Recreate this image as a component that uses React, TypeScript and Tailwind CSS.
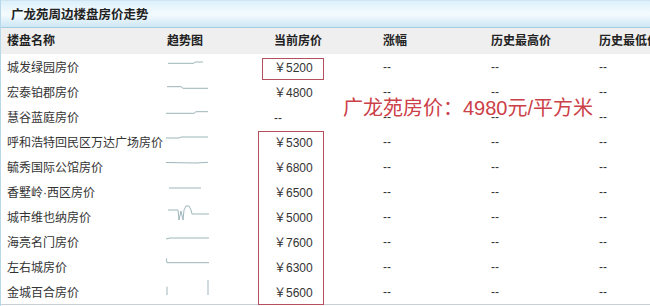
type Row = {
  name: string;
  price?: string;
  spark: string[];
};

const rows: Row[] = [
  { name: "城发绿园房价", price: "5200", spark: ["2,9.3 28,9.3 29,8 37,8"] },
  { name: "宏泰铂郡房价", price: "4800", spark: ["1,7.7 15,7.7 17,9.3 42,9.3"] },
  { name: "慧谷蓝庭房价", spark: ["0,9.3 28,9.3 30,7.7 42,7.7"] },
  { name: "呼和浩特回民区万达广场房价", price: "5300", spark: ["0,9 13,9 15,8 42,8"] },
  { name: "毓秀国际公馆房价", price: "6800", spark: ["0,8.5 30,9 42,8.3"] },
  { name: "香墅岭·西区房价", price: "6500", spark: ["3,9 35,9"] },
  {
    name: "城市维也纳房价",
    price: "5000",
    spark: ["2,6 12,6 13,16 15,7 17,16 18,6 20,2 23,2 25,6 26,10 43,10"],
  },
  { name: "海亮名门房价", price: "7600", spark: ["0,10 4,9 43,9"] },
  { name: "左右城房价", price: "6300", spark: ["0,4 1,8.7 43,8.7"] },
  { name: "金城百合房价", price: "5600", spark: ["1,7.7 1,16", "42,1 42,16"] },
];

const cols = "grid grid-cols-[160px_107px_109px_108px_108px_108px]";

function Sparkline({ lines }: { lines: string[] }) {
  return (
    <svg width="45" height="25" viewBox="0 0 45 25" className="ml-[5px]">
      {lines.map((pts, i) => (
        <polyline key={i} points={pts} fill="none" stroke="#9db6ba" strokeWidth="1" />
      ))}
    </svg>
  );
}

export default function App() {
  return (
    <div
      className="relative w-[650px] h-[306px] overflow-hidden bg-white text-[12px] text-[#333] border-l border-[#b7d8e8]"
      style={{ fontFamily: '"Liberation Sans", "Noto Sans CJK SC", sans-serif' }}
    >
      <div className="h-[28px] border-t border-[#cfe6f2] border-b border-b-[#a6cde1] bg-linear-to-b from-[#dcf0fa] via-[#f5fbfe] to-[#cde7f5] flex items-center pl-[10px] pt-[2px]">
        <span className="font-bold text-[12.5px] text-[#222]">广龙苑周边楼盘房价走势</span>
      </div>

      <div className={`${cols} w-[700px] h-[26px] items-center bg-[#efefef] font-bold text-[#222]`}>
        <div className="pl-[6px]">楼盘名称</div>
        <div className="pl-[6px]">趋势图</div>
        <div className="pl-[6px]">当前房价</div>
        <div className="pl-[6px]">涨幅</div>
        <div className="pl-[6px]">历史最高价</div>
        <div className="pl-[6px]">历史最低价</div>
      </div>

      <div className="w-[700px] border-b border-[#c9d1d8]">
        {rows.map((r) => (
          <div key={r.name} className={`${cols} h-[25px] items-center`}>
            <div className="pl-[6px] whitespace-nowrap pt-[2px]">{r.name}</div>
            <div className="h-[25px]">
              <Sparkline lines={r.spark} />
            </div>
            <div className="pl-[6px] pt-[2px]">{r.price ? `￥${r.price}` : "--"}</div>
            <div className="pl-[6px]">--</div>
            <div className="pl-[6px]">--</div>
            <div className="pl-[6px]">--</div>
          </div>
        ))}
      </div>

      {/* highlight marks over the price column */}
      <div className="absolute left-[261px] top-[58px] w-[62px] h-[22px] border-[1.5px] border-[#b4505e]" />
      <div className="absolute left-[257px] top-[131px] w-[66px] h-[174px] border-[1.5px] border-[#b4505e]" />

      <div className="absolute left-[342px] top-[96px] text-[20px] leading-[24px] text-[#cc4048] whitespace-nowrap">
        广龙苑房价：4980元/平方米
      </div>
    </div>
  );
}
